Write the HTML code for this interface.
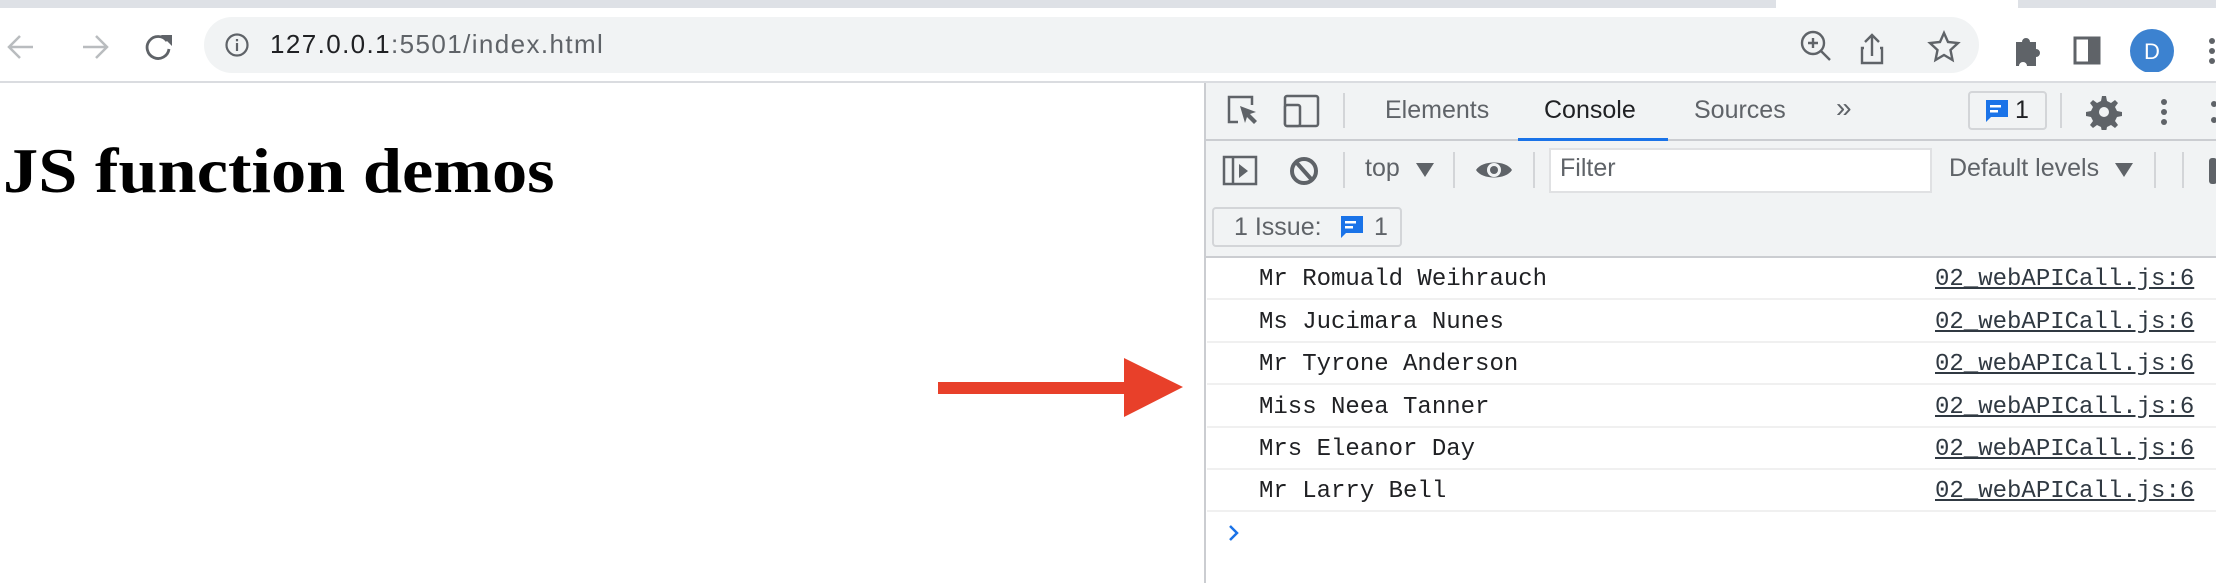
<!DOCTYPE html>
<html><head><meta charset="utf-8"><style>
*{margin:0;padding:0;box-sizing:border-box}
body{width:2216px;height:583px;overflow:hidden;background:#fff;position:relative;font-family:"Liberation Sans",sans-serif}
.a{position:absolute}
.sans{font-family:"Liberation Sans",sans-serif}
.mono{font-family:"Liberation Mono",monospace;font-size:24px;color:#202124}
.row{position:absolute;left:1207px;width:1009px;height:42px;border-bottom:2px solid #f0f0f0}
.row .t{position:absolute;left:52px;top:8px}
.row .l{position:absolute;left:728px;top:8px;text-decoration:underline;color:#303942}
.sep{position:absolute;width:2px;background:#d3d5d8}
</style></head><body>
<div class="a" style="left:0;top:0;width:2216px;height:8px;background:#dee1e6"></div>
<div class="a" style="left:1776px;top:0;width:242px;height:8px;background:#fff"></div>
<div class="a" style="left:0;top:8px;width:2216px;height:73px;background:#fff"></div>
<div class="a" style="left:0;top:81px;width:2216px;height:2px;background:#dadce0"></div>
<svg class="a" style="left:6px;top:33px" width="170" height="28" viewBox="0 0 170 28">
<g fill="none" stroke="#b9bcbf" stroke-width="2.5"><path d="M27 14H4M14 3L3 14l11 11"/><path d="M77 14h23M90 3l11 11-11 11"/></g>
<g fill="none" stroke="#5f6368" stroke-width="2.8"><path d="M161 8a11 11 0 1 0 2 8"/></g><path d="M155 2h11v11z" fill="#5f6368"/>
</svg>
<div class="a" style="left:204px;top:17px;width:1775px;height:56px;background:#f1f3f4;border-radius:28px"></div>
<svg class="a" style="left:224px;top:32px" width="26" height="26" viewBox="0 0 26 26"><circle cx="13" cy="13" r="10.5" fill="none" stroke="#5f6368" stroke-width="2.2"/><rect x="11.9" y="11" width="2.2" height="8" fill="#5f6368"/><rect x="11.9" y="7" width="2.2" height="2.3" fill="#5f6368"/></svg>
<div class="a sans" style="left:270px;top:29px;font-size:26px;line-height:30px;letter-spacing:1.4px;color:#202124;white-space:nowrap">127.0.0.1<span style="color:#5f6368">:5501/index.html</span></div>
<svg class="a" style="left:1798px;top:28px" width="420" height="44" viewBox="0 0 420 44">
<g fill="none" stroke="#5f6368" stroke-width="2.4">
<circle cx="15" cy="15" r="11"/><path d="M23 23l9 9M15 10v10M10 15h10"/>
<path d="M74 8v20M67 14l7-7 7 7M66 20h-2v15h20V20h-2"/>
<path d="M146 5l4 9 10 1-7.5 7 2 10-8.5-5-8.5 5 2-10-7.5-7 10-1z"/>
</g>
<path d="M218 14h6a4 4 0 0 1 8 0h6v7a4 4 0 0 1 0 8v9h-9a4 4 0 0 0-8 0h-3z" fill="#5f6368"/>
<rect x="277" y="10" width="24" height="25" fill="none" stroke="#5f6368" stroke-width="3"/><rect x="290" y="10" width="11" height="25" fill="#5f6368"/>
<circle cx="354" cy="23" r="22" fill="#3c82d0"/><text x="354" y="31" text-anchor="middle" font-family="Liberation Sans" font-size="22" fill="#fff">D</text>
<g fill="#5f6368"><circle cx="414" cy="13" r="3"/><circle cx="414" cy="23" r="3"/><circle cx="414" cy="33" r="3"/></g>
</svg>
<div class="a" style="left:3px;top:139px;font-family:'Liberation Serif',serif;font-weight:bold;font-size:64px;line-height:64px;color:#000;white-space:nowrap;transform:scaleX(1.1);transform-origin:0 0">JS function demos</div>
<svg class="a" style="left:936px;top:356px" width="250" height="62" viewBox="0 0 250 62"><path d="M2 26h186V2l59 29-59 30V38H2z" fill="#e8402a"/></svg>
<div class="a" style="left:1204px;top:83px;width:2px;height:500px;background:#cbcdd1"></div>
<div class="a" style="left:1206px;top:83px;width:1010px;height:174px;background:#f1f3f4"></div>
<div class="a" style="left:1206px;top:139px;width:1010px;height:2px;background:#cbcdd1"></div>
<div class="a" style="left:1206px;top:256px;width:1010px;height:2px;background:#cbcdd1"></div>
<svg class="a" style="left:1226px;top:93px" width="95" height="36" viewBox="0 0 95 36">
<path d="M12 29H3V4h23v8" fill="none" stroke="#5f6368" stroke-width="2.5"/><path d="M14 13l16 6-6 2 7 7-3 3-7-7-2 6z" fill="#5f6368"/>
<rect x="59" y="3" width="33" height="30" rx="2" fill="none" stroke="#5f6368" stroke-width="2.5"/><rect x="59" y="12" width="15" height="21" rx="2" fill="#f1f3f4" stroke="#5f6368" stroke-width="2.5"/>
</svg>
<div class="sep" style="left:1343px;top:93px;height:35px"></div>
<div class="a sans" style="left:1385px;top:96px;font-size:25px;color:#5f6368">Elements</div>
<div class="a sans" style="left:1544px;top:96px;font-size:25px;color:#202124">Console</div>
<div class="a sans" style="left:1694px;top:96px;font-size:25px;color:#5f6368">Sources</div>
<div class="a sans" style="left:1836px;top:92px;font-size:28px;color:#5f6368">»</div>
<div class="a" style="left:1518px;top:138px;width:150px;height:3px;background:#1a73e8"></div>
<div class="a" style="left:1968px;top:91px;width:79px;height:39px;border:2px solid #d3d5d8;border-radius:4px"></div>
<svg class="a" style="left:1983px;top:98px" width="28" height="26" viewBox="0 0 28 26"><path d="M3 2h22v17H8l-5 5z" fill="#1a73e8"/><rect x="7" y="7" width="11" height="2.5" fill="#fff"/><rect x="7" y="12" width="8" height="2.5" fill="#fff"/></svg>
<div class="a sans" style="left:2015px;top:96px;font-size:25px;color:#202124">1</div>
<div class="sep" style="left:2060px;top:93px;height:35px"></div>
<svg class="a" style="left:2084px;top:94px" width="132" height="36" viewBox="0 0 132 36">
<path d="M18 2l4 0 1 5 4 2 4-3 3 3-3 4 2 4 5 1v4l-5 1-2 4 3 4-3 3-4-3-4 2-1 5h-4l-1-5-4-2-4 3-3-3 3-4-2-4-5-1v-4l5-1 2-4-3-4 3-3 4 3 4-2z" fill="#5f6368"/><circle cx="20" cy="18" r="5" fill="#f1f3f4"/>
<g fill="#5f6368"><circle cx="80" cy="8" r="3"/><circle cx="80" cy="18" r="3"/><circle cx="80" cy="28" r="3"/><circle cx="130" cy="10" r="3"/><circle cx="130" cy="26" r="3"/></g>
</svg>
<svg class="a" style="left:1222px;top:155px" width="100" height="32" viewBox="0 0 100 32">
<rect x="2" y="2" width="32" height="27" fill="none" stroke="#5f6368" stroke-width="2.5"/><path d="M11 2v27" stroke="#5f6368" stroke-width="2.5"/><path d="M17 9l9 7-9 7z" fill="#5f6368"/>
<circle cx="82" cy="16" r="12" fill="none" stroke="#5f6368" stroke-width="4"/><path d="M74 7l16 18" stroke="#5f6368" stroke-width="4"/>
</svg>
<div class="sep" style="left:1343px;top:152px;height:36px"></div>
<div class="a sans" style="left:1365px;top:154px;font-size:25px;color:#5f6368">top</div>
<svg class="a" style="left:1416px;top:163px" width="18" height="14"><path d="M0 0h18l-9 14z" fill="#5f6368"/></svg>
<div class="sep" style="left:1453px;top:152px;height:36px"></div>
<svg class="a" style="left:1475px;top:157px" width="38" height="26" viewBox="0 0 38 26"><path d="M1 13C7 3 31 3 37 13 31 23 7 23 1 13z" fill="#5f6368"/><circle cx="19" cy="13" r="7" fill="#f1f3f4"/><circle cx="19" cy="13" r="4" fill="#5f6368"/></svg>
<div class="sep" style="left:1533px;top:152px;height:36px"></div>
<div class="a" style="left:1549px;top:148px;width:383px;height:45px;background:#fff;border:2px solid #e0e1e3"></div>
<div class="a sans" style="left:1560px;top:154px;font-size:25px;color:#5f6368">Filter</div>
<div class="a sans" style="left:1949px;top:154px;font-size:25px;color:#5f6368">Default levels</div>
<svg class="a" style="left:2115px;top:163px" width="18" height="14"><path d="M0 0h18l-9 14z" fill="#5f6368"/></svg>
<div class="sep" style="left:2154px;top:152px;height:36px"></div>
<div class="sep" style="left:2182px;top:152px;height:36px"></div>
<div class="a" style="left:2209px;top:158px;width:8px;height:26px;background:#5f6368;border-radius:3px"></div>
<div class="a" style="left:1212px;top:207px;width:190px;height:40px;border:2px solid #d3d5d8;border-radius:4px"></div>
<div class="a sans" style="left:1234px;top:213px;font-size:25px;color:#5f6368">1 Issue:</div>
<svg class="a" style="left:1338px;top:214px" width="28" height="26" viewBox="0 0 28 26"><path d="M3 2h22v17H8l-5 5z" fill="#1a73e8"/><rect x="7" y="7" width="11" height="2.5" fill="#fff"/><rect x="7" y="12" width="8" height="2.5" fill="#fff"/></svg>
<div class="a sans" style="left:1374px;top:213px;font-size:25px;color:#5f6368">1</div>
<div class="row mono" style="top:258px"><span class="t">Mr Romuald Weihrauch</span><span class="l">02_webAPICall.js:6</span></div>
<div class="row mono" style="top:301px"><span class="t">Ms Jucimara Nunes</span><span class="l">02_webAPICall.js:6</span></div>
<div class="row mono" style="top:343px"><span class="t">Mr Tyrone Anderson</span><span class="l">02_webAPICall.js:6</span></div>
<div class="row mono" style="top:386px"><span class="t">Miss Neea Tanner</span><span class="l">02_webAPICall.js:6</span></div>
<div class="row mono" style="top:428px"><span class="t">Mrs Eleanor Day</span><span class="l">02_webAPICall.js:6</span></div>
<div class="row mono" style="top:470px"><span class="t">Mr Larry Bell</span><span class="l">02_webAPICall.js:6</span></div>
<svg class="a" style="left:1227px;top:524px" width="14" height="18"><path d="M3 2l7 7-7 7" fill="none" stroke="#1a73e8" stroke-width="2.5"/></svg>
</body></html>
